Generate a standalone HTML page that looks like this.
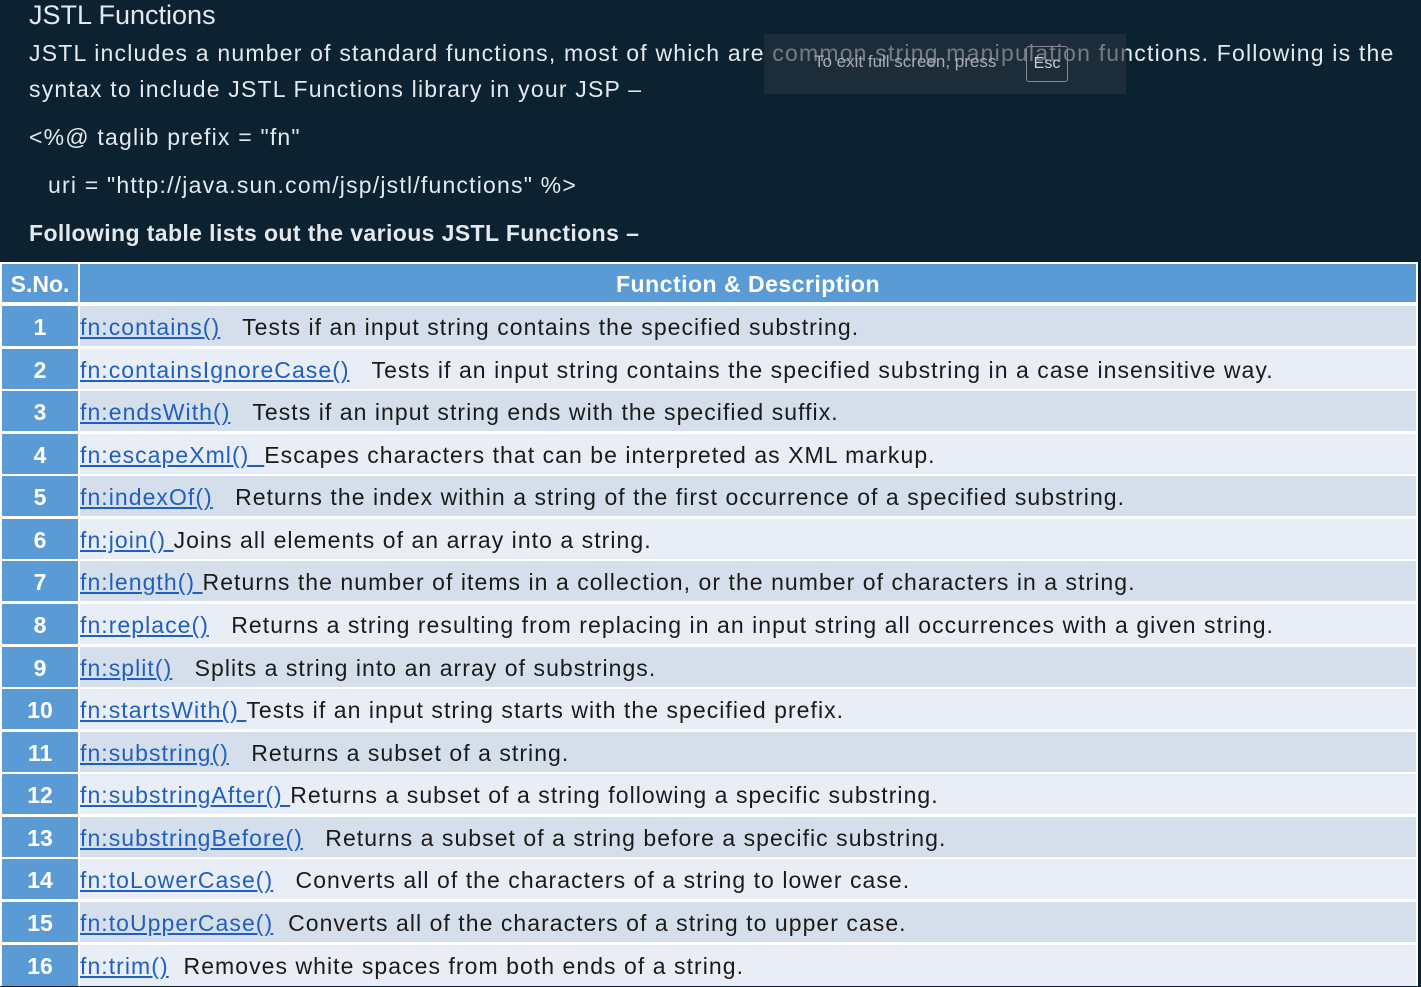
<!DOCTYPE html>
<html><head><meta charset="utf-8"><style>
body{margin:0;width:1421px;height:986px;background:#0c2230;overflow:hidden;font-family:"Liberation Sans",sans-serif;color:#e4e9ee;position:relative}
.t{position:absolute;white-space:nowrap}
.p{font-size:23px;letter-spacing:1.2px}
.row{position:absolute;left:2px;width:1414px;height:40px;}
.n{position:absolute;left:0;top:0;width:76px;height:100%;background:#5b9bd5;color:#fff;font-weight:bold;font-size:23px;text-align:center;line-height:42px}
.d{position:absolute;left:78px;top:0;right:0;height:100%;color:#1a1a1a;font-size:23px;letter-spacing:1.05px;line-height:42px;white-space:nowrap}
.d a{color:#1f5fbf;text-decoration:underline}
.odd .d{background:#d5dfec}.even .d{background:#e9eef6}
.toast{position:absolute;left:764px;top:34px;width:362px;height:60px;background:rgba(40,52,62,.6)}
</style></head><body>
<div class="t" style="left:29px;top:0;font-size:27px">JSTL Functions</div>
<div class="t p" style="left:29px;top:40px">JSTL includes a number of standard functions, most of which are common string manipulation functions. Following is the</div>
<div class="t p" style="left:29px;top:76px">syntax to include JSTL Functions library in your JSP –</div>
<div class="t p" style="left:29px;top:124px">&lt;%@ taglib prefix = "fn"</div>
<div class="t p" style="left:48px;top:172px">uri = "http://java.sun.com/jsp/jstl/functions" %&gt;</div>
<div class="t" style="left:29px;top:220px;font-size:23px;letter-spacing:0.4px;font-weight:bold">Following table lists out the various JSTL Functions –</div>
<div class="toast"><div class="t" style="left:50px;top:18px;font-size:17px;color:#aab">To exit full screen, press</div><div class="t" style="left:262px;top:12px;width:40px;height:34px;border:1px solid #889;border-radius:3px;font-size:16px;color:#ccd;text-align:center;line-height:34px">Esc</div></div>
<div style="position:absolute;left:0;top:262px;width:1418px;height:724px;background:#fff"></div>
<div class="row" style="top:264px;height:38px;background:#5b9bd5"><div class="n" style="line-height:40px;border-right:2px solid #fff;font-size:23px">S.No.</div><div class="t" style="left:78px;right:0;text-align:center;color:#fff;font-weight:bold;font-size:23px;letter-spacing:0.5px;line-height:40px">Function &amp; Description</div></div>
<div class="row odd" style="top:306px"><div class="n">1</div><div class="d"><a>fn:contains()</a>&nbsp;&nbsp; Tests if an input string contains the specified substring.</div></div>
<div class="row even" style="top:349px"><div class="n">2</div><div class="d"><a>fn:containsIgnoreCase()</a>&nbsp;&nbsp; Tests if an input string contains the specified substring in a case insensitive way.</div></div>
<div class="row odd" style="top:391px"><div class="n">3</div><div class="d"><a>fn:endsWith()</a>&nbsp;&nbsp; Tests if an input string ends with the specified suffix.</div></div>
<div class="row even" style="top:434px"><div class="n">4</div><div class="d"><a>fn:escapeXml()&nbsp;&nbsp;</a>Escapes characters that can be interpreted as XML markup.</div></div>
<div class="row odd" style="top:476px"><div class="n">5</div><div class="d"><a>fn:indexOf()</a>&nbsp;&nbsp; Returns the index within a string of the first occurrence of a specified substring.</div></div>
<div class="row even" style="top:519px"><div class="n">6</div><div class="d"><a>fn:join()&nbsp;</a>Joins all elements of an array into a string.</div></div>
<div class="row odd" style="top:561px"><div class="n">7</div><div class="d"><a>fn:length()&nbsp;</a>Returns the number of items in a collection, or the number of characters in a string.</div></div>
<div class="row even" style="top:604px"><div class="n">8</div><div class="d"><a>fn:replace()</a>&nbsp;&nbsp; Returns a string resulting from replacing in an input string all occurrences with a given string.</div></div>
<div class="row odd" style="top:647px"><div class="n">9</div><div class="d"><a>fn:split()</a>&nbsp;&nbsp; Splits a string into an array of substrings.</div></div>
<div class="row even" style="top:689px"><div class="n">10</div><div class="d"><a>fn:startsWith()&nbsp;</a>Tests if an input string starts with the specified prefix.</div></div>
<div class="row odd" style="top:732px"><div class="n">11</div><div class="d"><a>fn:substring()</a>&nbsp;&nbsp; Returns a subset of a string.</div></div>
<div class="row even" style="top:774px"><div class="n">12</div><div class="d"><a>fn:substringAfter()&nbsp;</a>Returns a subset of a string following a specific substring.</div></div>
<div class="row odd" style="top:817px"><div class="n">13</div><div class="d"><a>fn:substringBefore()</a>&nbsp;&nbsp; Returns a subset of a string before a specific substring.</div></div>
<div class="row even" style="top:859px"><div class="n">14</div><div class="d"><a>fn:toLowerCase()</a>&nbsp;&nbsp; Converts all of the characters of a string to lower case.</div></div>
<div class="row odd" style="top:902px"><div class="n">15</div><div class="d"><a>fn:toUpperCase()</a>&nbsp; Converts all of the characters of a string to upper case.</div></div>
<div class="row even" style="top:945px;height:41px"><div class="n">16</div><div class="d"><a>fn:trim()</a>&nbsp; Removes white spaces from both ends of a string.</div></div>
<div style="position:absolute;left:1418px;top:262px;width:3px;height:724px;background:#0c2230"></div>
</body></html>
